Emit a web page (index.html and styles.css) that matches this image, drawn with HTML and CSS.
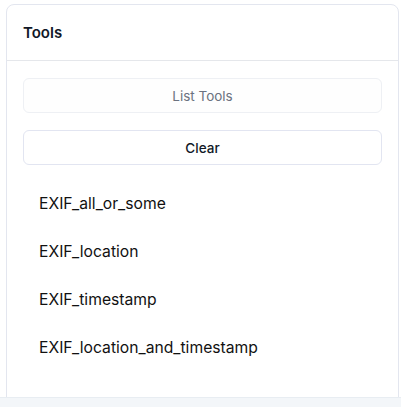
FILE: index.html
```html
<!DOCTYPE html>
<html>
<head>
<meta charset="utf-8">
<link rel="stylesheet" href="styles.css">
</head>
<body>
<div class="card">
  <div class="card-header">Tools</div>
  <div class="card-body">
    <button class="btn btn-disabled">List Tools</button>
    <button class="btn">Clear</button>
    <ul class="tool-list">
      <li>EXIF_all_or_some</li>
      <li>EXIF_location</li>
      <li>EXIF_timestamp</li>
      <li>EXIF_location_and_timestamp</li>
    </ul>
  </div>
</div>
<div class="footer-strip"></div>
</body>
</html>
```
FILE: styles.css
```css
html, body {
  margin: 0;
  padding: 0;
  background: #ffffff;
  font-family: Inter, "Noto Sans", sans-serif;
  color: #111827;
  overflow: hidden;
  height: 407px;
}
.card {
  margin: 4px 2px 0 6px;
  border: 1px solid #e3e6ef;
  border-radius: 8px;
  height: 440px;
  box-sizing: border-box;
  background: #fff;
}
.card-header {
  height: 56px;
  box-sizing: border-box;
  padding: 0 16px;
  display: flex;
  align-items: center;
  font-size: 15px;
  font-weight: 600;
  border-bottom: 1px solid #e5e7eb;
}
.card-body {
  padding: 17px 16px 0 16px;
  display: flex;
  flex-direction: column;
}
.btn {
  height: 35px;
  border: 1px solid #e2e5f1;
  border-radius: 6px;
  background: #fff;
  font-family: inherit;
  font-size: 13.5px;
  font-weight: 500;
  color: #111827;
  margin-bottom: 17px;
}
.btn-disabled {
  color: #6b7280;
  font-weight: 400;
  border-color: #eef0f4;
  background: #fefefe;
}
.tool-list {
  list-style: none;
  margin: 0;
  padding: 0 16px;
}
.tool-list li {
  height: 48px;
  display: flex;
  align-items: center;
  font-size: 15.7px;
  color: #111;
}
.tool-list li:first-child {
  margin-top: -3px;
}
.footer-strip {
  position: fixed;
  left: 0;
  right: 0;
  top: 397px;
  height: 10px;
  background: #f3f6f9;
  border-top: 1px solid #e8edf2;
}
```
